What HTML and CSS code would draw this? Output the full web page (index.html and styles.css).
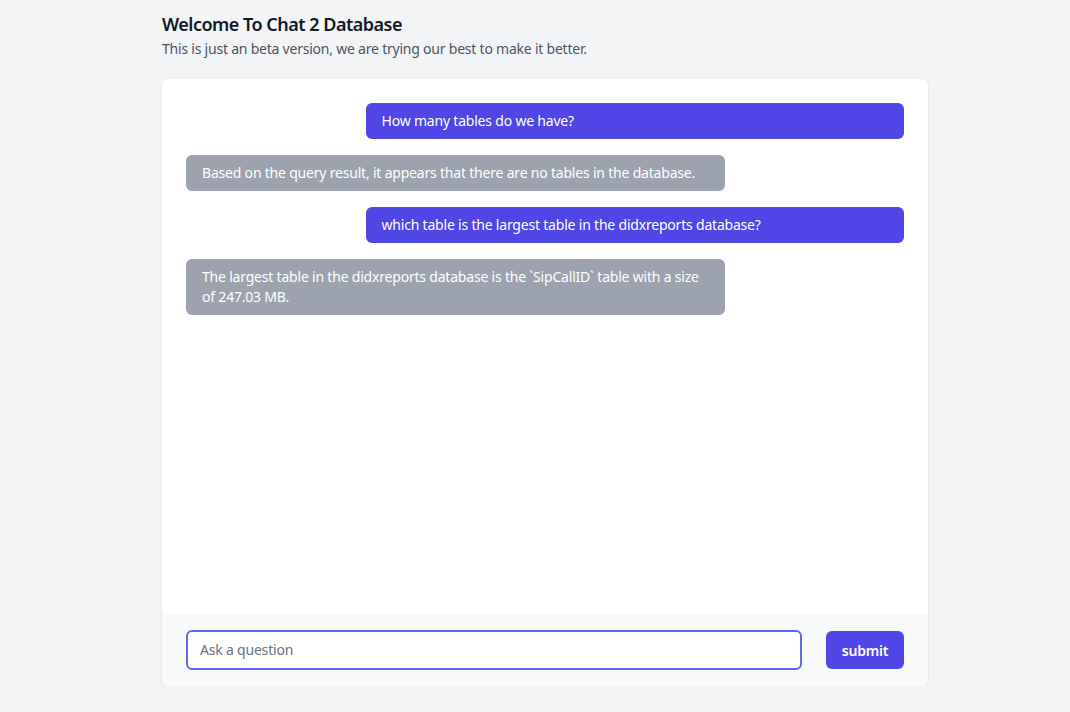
FILE: index.html
```html
<!DOCTYPE html>
<html lang="en">
<head>
<meta charset="utf-8">
<title>Chat 2 Database</title>
<link rel="stylesheet" href="styles.css">
</head>
<body>
<main class="page">
  <header class="intro">
    <h1 class="title">Welcome To Chat 2 Database</h1>
    <p class="subtitle">This is just an beta version, we are trying our best to make it better.</p>
  </header>
  <section class="card">
    <div class="messages">
      <div class="msg msg-user">How many tables do we have?</div>
      <div class="msg msg-bot">Based on the query result, it appears that there are no tables in the database.</div>
      <div class="msg msg-user">which table is the largest table in the didxreports database?</div>
      <div class="msg msg-bot">The largest table in the didxreports database is the `SipCallID` table with a size of 247.03 MB.</div>
    </div>
    <form class="composer">
      <input class="ask" type="text" placeholder="Ask a question">
      <button class="submit" type="button">submit</button>
    </form>
  </section>
</main>
</body>
</html>
```

FILE: styles.css
```css
* { box-sizing: border-box; }
html, body { margin: 0; padding: 0; }
body {
  background: #f3f4f6;
  font-family: "Noto Sans", "Open Sans", sans-serif;
  color: #111827;
}
.page {
  width: 766px;
  margin-left: 162px;
  padding-top: 12px;
}
.intro { height: 67px; }
.title {
  margin: 0;
  font-size: 18px;
  line-height: 24px;
  font-weight: 600;
  letter-spacing: -0.5px;
  color: #111827;
}
.subtitle {
  margin: 1px 0 0;
  font-size: 14px;
  line-height: 24px;
  letter-spacing: -0.22px;
  color: #4b5563;
}
.card {
  background: #fff;
  border-radius: 6px;
  box-shadow: 0 1px 3px rgba(0,0,0,0.08), 0 1px 2px rgba(0,0,0,0.04);
  height: 607px;
  display: flex;
  flex-direction: column;
  overflow: hidden;
}
.messages {
  flex: 1;
  padding: 24px;
  display: flex;
  flex-direction: column;
  gap: 16px;
}
.msg {
  width: 75%;
  padding: 8px 16px;
  border-radius: 6px;
  font-size: 14px;
  line-height: 20px;
  letter-spacing: -0.2px;
  color: #fff;
}
.msg-user { align-self: flex-end; background: #4f46e5; }
.msg-bot { align-self: flex-start; background: #9ca3af; }
.composer {
  margin: 0;
  background: #f9fafb;
  height: 72px;
  padding: 16px 24px;
  display: flex;
  align-items: center;
  gap: 24px;
}
.ask {
  flex: 1;
  height: 40px;
  margin-top: -1px;
  border: 2px solid #6366f1;
  border-radius: 6px;
  padding: 0 12px;
  font-family: inherit;
  font-size: 14px;
  letter-spacing: -0.2px;
  color: #111827;
  background: #fff;
  outline: none;
}
.ask::placeholder { color: #6b7280; }
.submit {
  width: 78px;
  height: 38px;
  border: 0;
  border-radius: 6px;
  background: #4f46e5;
  color: #fff;
  font-family: inherit;
  font-size: 14px;
  font-weight: 600;
  letter-spacing: -0.2px;
}
```
